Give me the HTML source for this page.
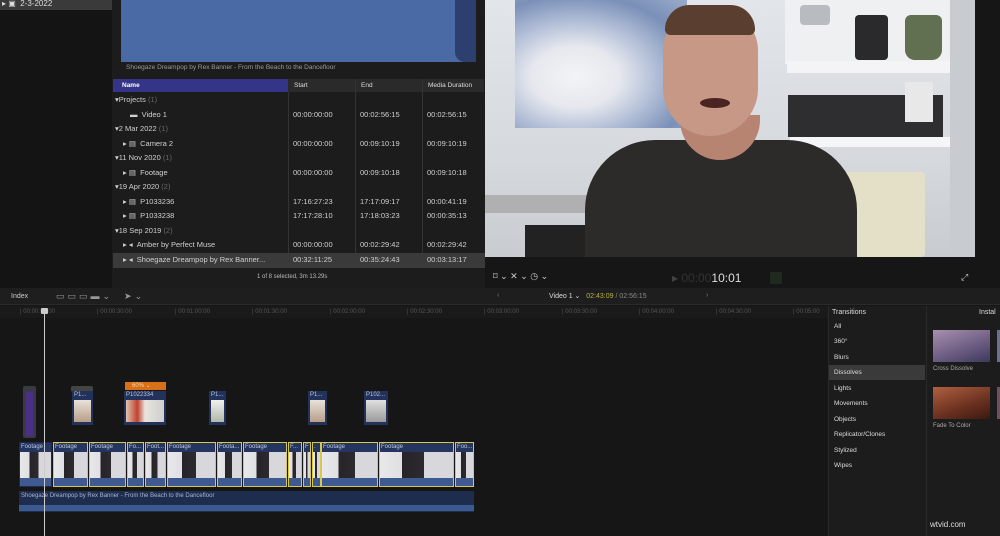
<!DOCTYPE html><html><head><style>
*{margin:0;padding:0;box-sizing:border-box}
body{width:1000px;height:536px;background:#161616;font-family:"Liberation Sans",sans-serif;color:#c8c8c8;position:relative;overflow:hidden;font-size:7px}
.a{position:absolute}
.row{position:absolute;left:113px;width:372px;height:14.5px;font-size:7.5px;line-height:14.5px;color:#d0d0d0}
.row span{position:absolute}
.c1{left:180px}.c2{left:247px}.c3{left:314px}
.g{color:#666}
.tl{position:absolute;font-size:6px;color:#555;top:309px}
.trl{position:absolute;left:834px;font-size:6.5px;color:#ddd}
.clip{position:absolute;top:442px;height:45px;border:1.5px solid #d8c84a;background:#2a3c64;overflow:hidden}
.clip b{display:block;height:9px;font-weight:normal;font-size:6px;color:#c0c8e0;padding-left:1px;line-height:9px;background:#243560;white-space:nowrap}
.clip i{display:block;height:26px;background:linear-gradient(90deg,#e8e8ea 0,#e0e0e2 30%,#26242a 30%,#2c2a2e 60%,#d8d8dc 60%)}
.clip u{display:block;height:8px;background:#3e5a90}
.cc{position:absolute;top:391px;height:34px;background:#22325a}
.cc b{display:block;font-weight:normal;font-size:6px;color:#b8c4e0;height:9px;line-height:9px;padding-left:2px}
.cc i{display:block;height:22px;margin:0 2px;background:linear-gradient(#e8e2da,#b89e88)}
</style></head><body>
<div class="a" style="left:0;top:0;width:112px;height:288px;background:#141414"></div>
<div class="a" style="left:0;top:0;width:112px;height:10px;background:#3a3a3a;font-size:8px;line-height:8px;color:#ddd;padding-left:2px">▸ ▣ &nbsp;2-3-2022</div>
<div class="a" style="left:112px;top:0;width:373px;height:288px;background:#1c1c1c"></div>
<div class="a" style="left:121px;top:0;width:355px;height:62px;background:#4a6aa6"></div>
<div class="a" style="left:455px;top:0;width:21px;height:62px;background:#2d3f6e;border-radius:0 0 0 10px"></div>
<div class="a" style="left:126px;top:64px;font-size:6.5px;color:#999">Shoegaze Dreampop by Rex Banner - From the Beach to the Dancefloor</div>
<div class="a" style="left:113px;top:79px;width:175px;height:13px;background:#343488;font-size:6.5px;line-height:13px;color:#fff;padding-left:9px;font-weight:bold">Name</div>
<div class="a" style="left:288px;top:79px;width:196px;height:13px;background:#2a2a2a;font-size:6.5px;line-height:13px;color:#ddd"><span class="a" style="left:6px">Start</span><span class="a" style="left:73px">End</span><span class="a" style="left:140px">Media Duration</span></div>
<div class="a" style="left:288px;top:92px;width:1px;height:174px;background:#333"></div>
<div class="a" style="left:355px;top:79px;width:1px;height:187px;background:#333"></div>
<div class="a" style="left:422px;top:79px;width:1px;height:187px;background:#333"></div>
<div class="row" style="top:93px"><span style="left:2px">▾Projects <span class="g">&nbsp;(1)</span></span></div>
<div class="row" style="top:108px"><span style="left:17px">▬ &nbsp;Video 1</span><span class="c1">00:00:00:00</span><span class="c2">00:02:56:15</span><span class="c3">00:02:56:15</span></div>
<div class="row" style="top:122px"><span style="left:2px">▾2 Mar 2022 <span class="g">&nbsp;(1)</span></span></div>
<div class="row" style="top:137px"><span style="left:10px">▸ ▤ &nbsp;Camera 2</span><span class="c1">00:00:00:00</span><span class="c2">00:09:10:19</span><span class="c3">00:09:10:19</span></div>
<div class="row" style="top:151px"><span style="left:2px">▾11 Nov 2020 <span class="g">&nbsp;(1)</span></span></div>
<div class="row" style="top:166px"><span style="left:10px">▸ ▤ &nbsp;Footage</span><span class="c1">00:00:00:00</span><span class="c2">00:09:10:18</span><span class="c3">00:09:10:18</span></div>
<div class="row" style="top:180px"><span style="left:2px">▾19 Apr 2020 <span class="g">&nbsp;(2)</span></span></div>
<div class="row" style="top:195px"><span style="left:10px">▸ ▤ &nbsp;P1033236</span><span class="c1">17:16:27:23</span><span class="c2">17:17:09:17</span><span class="c3">00:00:41:19</span></div>
<div class="row" style="top:209px"><span style="left:10px">▸ ▤ &nbsp;P1033238</span><span class="c1">17:17:28:10</span><span class="c2">17:18:03:23</span><span class="c3">00:00:35:13</span></div>
<div class="row" style="top:224px"><span style="left:2px">▾18 Sep 2019 <span class="g">&nbsp;(2)</span></span></div>
<div class="row" style="top:238px"><span style="left:10px">▸ ◂ &nbsp;Amber by Perfect Muse</span><span class="c1">00:00:00:00</span><span class="c2">00:02:29:42</span><span class="c3">00:02:29:42</span></div>
<div class="row" style="top:253px;background:#3a3a3a"><span style="left:10px">▸ ◂ &nbsp;Shoegaze Dreampop by Rex Banner...</span><span class="c1">00:32:11:25</span><span class="c2">00:35:24:43</span><span class="c3">00:03:13:17</span></div>
<div class="a" style="left:257px;top:274px;font-size:6px;color:#bbb">1 of 8 selected, 3m 13.29s</div>
<div class="a" style="left:485px;top:0;width:515px;height:288px;background:#161616"></div>
<div class="a" style="left:485px;top:0;width:490px;height:257px;background:linear-gradient(180deg,#e2e6ea,#d6dade 60%,#c8ccd0);overflow:hidden">
 <div class="a" style="left:30px;top:0;width:172px;height:128px;background:radial-gradient(ellipse at 35% 60%,#f4f4f6 0,#e6e8ee 28%,#b4c0d8 50%,#7a90b8 75%,#9aaccc)"></div>
 <div class="a" style="left:300px;top:0;width:165px;height:64px;background:#eef0f2"></div>
 <div class="a" style="left:315px;top:5px;width:30px;height:20px;background:#b8bcc0;border-radius:4px"></div>
 <div class="a" style="left:370px;top:15px;width:33px;height:45px;background:#2a2a2c;border-radius:4px"></div>
 <div class="a" style="left:420px;top:15px;width:37px;height:45px;background:#607050;border-radius:6px 6px 10px 10px"></div>
 <div class="a" style="left:302px;top:61px;width:163px;height:12px;background:#f4f4f6"></div>
 <div class="a" style="left:303px;top:95px;width:155px;height:42px;background:#2e2e30"></div>
 <div class="a" style="left:420px;top:82px;width:28px;height:40px;background:#e8e8e8"></div>
 <div class="a" style="left:305px;top:137px;width:160px;height:10px;background:#f4f6f8"></div>
 <div class="a" style="left:350px;top:172px;width:90px;height:85px;background:#e4e0c8;border-radius:4px"></div>
 <div class="a" style="left:0;top:195px;width:110px;height:18px;background:#b0b0b2"></div>
 <div class="a" style="left:40px;top:225px;width:60px;height:32px;background:#222"></div>
 <div class="a" style="left:465px;top:0;width:25px;height:257px;background:#c8ccd0"></div>
 <div class="a" style="left:100px;top:140px;width:272px;height:140px;background:#2d2b29;border-radius:70px 70px 0 0"></div>
 <div class="a" style="left:195px;top:115px;width:80px;height:45px;background:#b78472;border-radius:0 0 40px 40px"></div>
 <div class="a" style="left:178px;top:8px;width:95px;height:128px;background:#c79886;border-radius:45px 45px 50px 50px"></div>
 <div class="a" style="left:180px;top:5px;width:90px;height:30px;background:#5a3e30;border-radius:45px 45px 10px 10px"></div>
 <div class="a" style="left:215px;top:98px;width:30px;height:10px;background:#4a2420;border-radius:50%"></div>
</div>
<div class="a" style="left:493px;top:271px;font-size:9px;color:#ccc">⌑ ⌄ ✕ ⌄ ◷ ⌄</div>
<div class="a" style="left:672px;top:271px;font-size:12px;color:#444">▸ <span style="color:#333">00:00</span><span style="color:#ddd">10:01</span></div>
<div class="a" style="left:770px;top:272px;width:12px;height:12px;background:#1e2a1e"></div>
<div class="a" style="left:961px;top:272px;font-size:9px;color:#ccc">⤢</div>
<div class="a" style="left:0;top:288px;width:1000px;height:17px;background:#1e1e1e;border-bottom:1px solid #2a2a2a"></div>
<div class="a" style="left:11px;top:293px;font-size:7px;color:#ccc">Index</div>
<div class="a" style="left:56px;top:291px;font-size:9px;color:#999;letter-spacing:3px">▭▭▭▬⌄ &nbsp;➤⌄</div>
<div class="a" style="left:497px;top:292px;font-size:7px;color:#777">‹</div>
<div class="a" style="left:549px;top:292px;font-size:7px;color:#ddd">Video 1 ⌄ &nbsp;&nbsp;<span style="color:#b8b040">02:43:09</span><span style="color:#888"> / 02:56:15</span></div>
<div class="a" style="left:706px;top:292px;font-size:7px;color:#777">›</div>
<div class="a" style="left:0;top:306px;width:828px;height:12px;background:#1a1a1a"></div>
<div class="tl" style="left:20px">| 00:00:00:00</div><div class="tl" style="left:97px">| 00:00:30:00</div><div class="tl" style="left:175px">| 00:01:00:00</div><div class="tl" style="left:252px">| 00:01:30:00</div><div class="tl" style="left:330px">| 00:02:00:00</div><div class="tl" style="left:407px">| 00:02:30:00</div><div class="tl" style="left:484px">| 00:03:00:00</div><div class="tl" style="left:562px">| 00:03:30:00</div><div class="tl" style="left:639px">| 00:04:00:00</div><div class="tl" style="left:716px">| 00:04:30:00</div><div class="tl" style="left:793px">| 00:05:00</div>
<div class="a" style="left:23px;top:386px;width:13px;height:52px;background:#3a3a44;border-radius:2px"></div>
<div class="a" style="left:26px;top:392px;width:7px;height:44px;background:#4a2e88"></div>
<div class="a" style="left:71px;top:386px;width:22px;height:6px;background:#444;border-radius:2px"></div>
<div class="cc" style="left:72px;width:21px"><b>P1...</b><i></i></div>
<div class="a" style="left:125px;top:382px;width:41px;height:8px;background:#d8701a;font-size:6px;line-height:8px;color:#f8d0a0;padding-left:7px">60% ⌄</div>
<div class="cc" style="left:124px;width:42px"><b>P1022334</b><i style="background:linear-gradient(90deg,#e0c4b0,#c04030 30%,#e8e4de 50%,#cfcfd0)"></i></div>
<div class="cc" style="left:209px;width:17px"><b>P1...</b><i style="background:linear-gradient(#f0f0ee,#b0b8a8)"></i></div>
<div class="cc" style="left:308px;width:19px"><b>P1...</b><i></i></div>
<div class="cc" style="left:364px;width:24px"><b>P102...</b><i style="background:linear-gradient(#e0e0e0,#9a9a9a)"></i></div>
<div class="clip" style="left:19px;width:33px;border-color:#1a2a50"><b>Footage</b><i></i><u></u></div>
<div class="clip" style="left:53px;width:35px"><b>Footage</b><i></i><u></u></div>
<div class="clip" style="left:89px;width:37px"><b>Footage</b><i></i><u></u></div>
<div class="clip" style="left:127px;width:17px"><b>Fo...</b><i></i><u></u></div>
<div class="clip" style="left:145px;width:21px"><b>Foot...</b><i></i><u></u></div>
<div class="clip" style="left:167px;width:49px"><b>Footage</b><i></i><u></u></div>
<div class="clip" style="left:217px;width:25px"><b>Foota...</b><i></i><u></u></div>
<div class="clip" style="left:243px;width:44px"><b>Footage</b><i></i><u></u></div>
<div class="clip" style="left:288px;width:14px"><b>F...</b><i></i><u></u></div>
<div class="clip" style="left:303px;width:8px"><b>F</b><i></i><u></u></div>
<div class="clip" style="left:312px;width:9px"><b>.</b><i></i><u></u></div>
<div class="clip" style="left:321px;width:57px"><b>Footage</b><i></i><u></u></div>
<div class="clip" style="left:379px;width:75px"><b>Footage</b><i></i><u></u></div>
<div class="clip" style="left:455px;width:19px"><b>Foo...</b><i></i><u></u></div>
<div class="a" style="left:19px;top:491px;width:455px;height:21px;background:#1e2c4e"></div>
<div class="a" style="left:19px;top:505px;width:455px;height:6px;background:#3a5a90"></div>
<div class="a" style="left:21px;top:493px;font-size:6px;color:#a8b4d0">Shoegaze Dreampop by Rex Banner - From the Beach to the Dancefloor</div>
<div class="a" style="left:44px;top:308px;width:1px;height:228px;background:#ccc"></div>
<div class="a" style="left:41px;top:308px;width:7px;height:6px;background:#ccc;border-radius:1px"></div>
<div class="a" style="left:828px;top:306px;width:98px;height:230px;background:#1c1c1c;border-left:1px solid #2a2a2a"></div>
<div class="a" style="left:926px;top:306px;width:74px;height:230px;background:#1c1c1c;border-left:1px solid #2a2a2a"></div>
<div class="a" style="left:832px;top:309px;font-size:7px;color:#ddd">Transitions</div>
<div class="a" style="left:979px;top:309px;font-size:7px;color:#ddd">Instal</div>
<div class="a" style="left:829px;top:365px;width:96px;height:15px;background:#3a3a3a"></div>
<div class="trl" style="top:323px">All</div><div class="trl" style="top:338px">360°</div><div class="trl" style="top:354px">Blurs</div><div class="trl" style="top:369px">Dissolves</div><div class="trl" style="top:385px">Lights</div><div class="trl" style="top:400px">Movements</div><div class="trl" style="top:416px">Objects</div><div class="trl" style="top:431px">Replicator/Clones</div><div class="trl" style="top:447px">Stylized</div><div class="trl" style="top:462px">Wipes</div>
<div class="a" style="left:933px;top:330px;width:57px;height:32px;background:linear-gradient(160deg,#a890b0,#6a5a80 60%,#3a3a5a)"></div>
<div class="a" style="left:997px;top:330px;width:3px;height:32px;background:#6a7090"></div>
<div class="a" style="left:933px;top:366px;font-size:6px;color:#aaa">Cross Dissolve</div>
<div class="a" style="left:933px;top:387px;width:57px;height:32px;background:linear-gradient(160deg,#b06040,#6a3020 60%,#3a1a10)"></div>
<div class="a" style="left:997px;top:387px;width:3px;height:32px;background:#705060"></div>
<div class="a" style="left:933px;top:423px;font-size:6px;color:#aaa">Fade To Color</div>
<div class="a" style="left:930px;top:520px;font-size:8px;color:#ddd">wtvid.com</div>
</body></html>
